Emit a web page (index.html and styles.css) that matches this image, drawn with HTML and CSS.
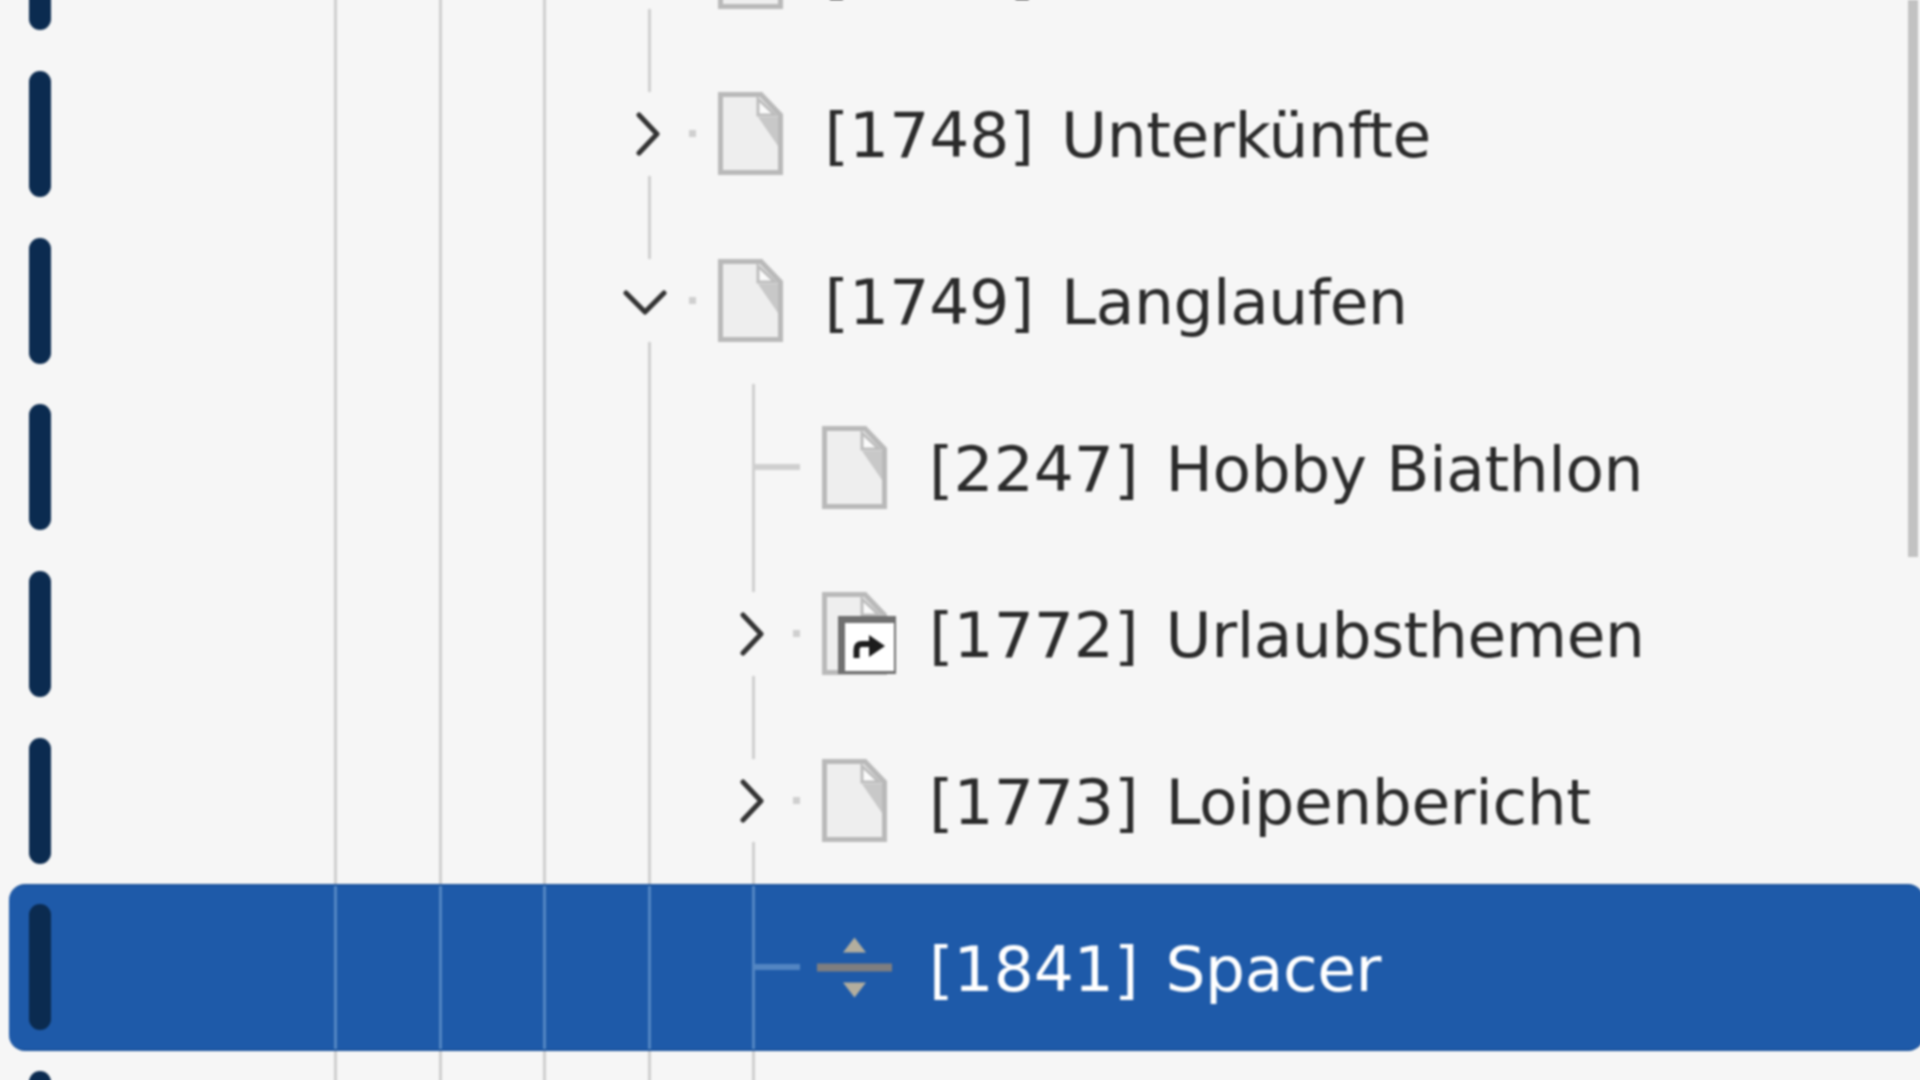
FILE: index.html
```html
<!DOCTYPE html>
<html lang="de">
<head>
    <meta charset="UTF-8">
    <meta name="viewport" content="width=device-width, initial-scale=1.0">
    <title>Seitenbaum</title>
    <link rel="stylesheet" href="styles.css">
</head>
<body>
    <svg class="icon-defs" aria-hidden="true">
        <symbol id="icon-page" viewBox="0 0 83 83">
            <path class="page-sheet" d="M11.5 2.5H52L71.5 23V80.5H11.5Z"/>
            <path class="page-shade" d="M49 25H69V54Z"/>
            <path class="page-corner" d="M49 7L66 23H49Z"/>
        </symbol>
        <symbol id="icon-shortcut" viewBox="0 0 83 83">
            <path class="page-sheet" d="M11.5 2.5H52L71.5 23V80.5H11.5Z"/>
            <path class="page-corner" d="M49 7L66 23H49Z"/>
            <rect class="shortcut-frame" x="25" y="24" width="58" height="58"/>
            <rect class="shortcut-inner" x="32" y="31" width="49" height="48"/>
            <path class="shortcut-head" d="M56 43L72 54L56 65Z"/>
            <path class="shortcut-tail" d="M43.5 66V58Q43.5 52 49 52H58"/>
        </symbol>
        <symbol id="icon-spacer" viewBox="0 0 83 83">
            <rect class="spacer-bar" x="4" y="37.5" width="75" height="8"/>
            <path class="spacer-arrow" d="M41.5 11.5L53 26.5H30Z"/>
            <path class="spacer-arrow" d="M30 56.5H53L41.5 71.5Z"/>
        </symbol>
    </svg>

    <div class="tree">
        <div class="node">
            <span class="grip"></span>
            <span class="guide"></span><span class="guide"></span><span class="guide"></span>
            <span class="toggle">
                <svg class="chevron chevron-right" viewBox="0 0 24 44"><path d="M3 3L21 22L3 41"/></svg>
                <span class="dot"></span>
            </span>
            <svg class="icon"><use href="#icon-page"/></svg>
            <span class="label"><span class="page-id">[1747]</span></span>
        </div>
        <div class="node">
            <span class="grip"></span>
            <span class="guide"></span><span class="guide"></span><span class="guide"></span>
            <span class="toggle">
                <svg class="chevron chevron-right" viewBox="0 0 24 44"><path d="M3 3L21 22L3 41"/></svg>
                <span class="dot"></span>
            </span>
            <svg class="icon"><use href="#icon-page"/></svg>
            <span class="label"><span class="page-id">[1748]</span> <span class="page-title">Unterkünfte</span></span>
        </div>
        <div class="node">
            <span class="grip"></span>
            <span class="guide"></span><span class="guide"></span><span class="guide"></span>
            <span class="toggle">
                <svg class="chevron chevron-down" viewBox="0 0 44 26"><path d="M3 3L22 22L41 3"/></svg>
                <span class="dot"></span>
            </span>
            <svg class="icon"><use href="#icon-page"/></svg>
            <span class="label"><span class="page-id">[1749]</span> <span class="page-title">Langlaufen</span></span>
        </div>
        <div class="node">
            <span class="grip"></span>
            <span class="guide"></span><span class="guide"></span><span class="guide"></span><span class="guide"></span>
            <span class="toggle branch"></span>
            <svg class="icon"><use href="#icon-page"/></svg>
            <span class="label"><span class="page-id">[2247]</span> <span class="page-title">Hobby Biathlon</span></span>
        </div>
        <div class="node">
            <span class="grip"></span>
            <span class="guide"></span><span class="guide"></span><span class="guide"></span><span class="guide"></span>
            <span class="toggle">
                <svg class="chevron chevron-right" viewBox="0 0 24 44"><path d="M3 3L21 22L3 41"/></svg>
                <span class="dot"></span>
            </span>
            <svg class="icon"><use href="#icon-shortcut"/></svg>
            <span class="label"><span class="page-id">[1772]</span> <span class="page-title">Urlaubsthemen</span></span>
        </div>
        <div class="node">
            <span class="grip"></span>
            <span class="guide"></span><span class="guide"></span><span class="guide"></span><span class="guide"></span>
            <span class="toggle">
                <svg class="chevron chevron-right" viewBox="0 0 24 44"><path d="M3 3L21 22L3 41"/></svg>
                <span class="dot"></span>
            </span>
            <svg class="icon"><use href="#icon-page"/></svg>
            <span class="label"><span class="page-id">[1773]</span> <span class="page-title">Loipenbericht</span></span>
        </div>
        <div class="node selected">
            <span class="grip"></span>
            <span class="guide"></span><span class="guide"></span><span class="guide"></span><span class="guide"></span>
            <span class="toggle branch"></span>
            <svg class="icon"><use href="#icon-spacer"/></svg>
            <span class="label"><span class="page-id">[1841]</span> <span class="page-title">Spacer</span></span>
        </div>
        <div class="node">
            <span class="grip"></span>
            <span class="guide"></span><span class="guide"></span><span class="guide"></span><span class="guide"></span>
            <span class="toggle branch"></span>
        </div>
    </div>

    <div class="scrollbar"></div>
</body>
</html>
```

FILE: styles.css
```css
:root {
    --bg: #f6f6f6;
    --line: #cfcfcf;
    --line-selected: #5285c2;
    --grip: #0b2b50;
    --selected: #1e5aa9;
    --text: #2b2b2b;
}

html, body {
    height: 100%;
}

body {
    background: var(--bg);
    margin: 0;
    overflow: hidden;
    font-family: "DejaVu Sans", sans-serif;
}

.icon-defs {
    position: absolute;
    width: 0;
    height: 0;
}

.tree {
    margin-top: -116px;
    filter: blur(0.8px);
}

.node {
    display: flex;
    align-items: center;
    height: 166.67px;
    margin-left: 9px;
    box-sizing: border-box;
    color: var(--text);
}

.grip {
    flex: none;
    width: 22px;
    height: 126px;
    margin: 0 283px 0 20px;
    background: var(--grip);
    border-radius: 11px;
}

.guide {
    flex: none;
    align-self: stretch;
    width: 104.5px;
    box-sizing: border-box;
    border-left: 3px solid var(--line);
}

/* last indent column: stubs above and below the toggle, or a full branch line */
.toggle {
    flex: none;
    align-self: stretch;
    position: relative;
    width: 61px;
}

.toggle::before,
.toggle::after {
    content: "";
    position: absolute;
    left: 0;
    width: 3px;
    height: 41.5px;
    background: var(--line);
}

.toggle::before { top: 0; }
.toggle::after { bottom: 0; }

.toggle.branch::before {
    height: 100%;
}

.toggle.branch::after {
    left: 3px;
    bottom: calc(50% - 3px);
    width: 45px;
    height: 6px;
}

.chevron {
    position: absolute;
    fill: none;
    stroke: #333;
    stroke-width: 5;
    stroke-linecap: round;
    stroke-linejoin: round;
}

.chevron-right {
    left: -12px;
    top: calc(50% - 22px);
    width: 24px;
    height: 44px;
}

.chevron-down {
    left: -25px;
    top: calc(50% - 11px);
    width: 44px;
    height: 26px;
}

.dot {
    position: absolute;
    left: 41px;
    top: calc(50% - 3.5px);
    width: 7px;
    height: 7px;
    background: var(--line);
}

.icon {
    flex: none;
    width: 83px;
    height: 83px;
}

.page-sheet {
    fill: #eee;
    stroke: #b9b9b9;
    stroke-width: 5;
}

.page-shade {
    fill: #c8c8c8;
}

.page-corner {
    fill: #fbfbfb;
    stroke: #bdbdbd;
    stroke-width: 3;
}

.shortcut-frame { fill: #707070; }
.shortcut-inner { fill: #fff; }
.shortcut-head { fill: #1c1c1c; }

.shortcut-tail {
    fill: none;
    stroke: #1c1c1c;
    stroke-width: 6;
}

.spacer-bar { fill: #7e7e80; }
.spacer-arrow { fill: #b3ae9e; }

.label {
    margin-left: 33px;
    padding-top: 4px;
    font-size: 63px;
    white-space: nowrap;
}

.page-id {
    margin-right: 7px;
}

.page-title {
    letter-spacing: -0.4px;
}

.selected {
    margin-right: -4px;
    background: var(--selected);
    border-top: 2px solid #1b539d;
    border-bottom: 2px solid #1b539d;
    border-radius: 16px;
    color: #fff;
}

.selected .guide {
    border-left-color: var(--line-selected);
}

.selected .toggle::before,
.selected .toggle::after {
    background: var(--line-selected);
}

.scrollbar {
    position: absolute;
    top: 0;
    right: 2px;
    width: 10px;
    height: 557px;
    background: #c2c2c2;
    filter: blur(0.8px);
}
```
